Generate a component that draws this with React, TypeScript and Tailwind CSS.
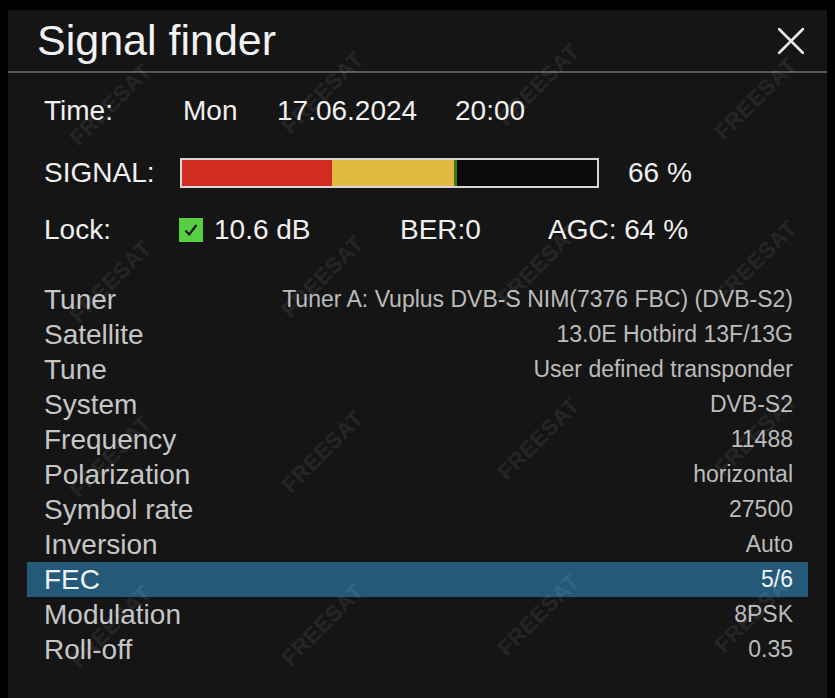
import React from 'react';

interface InfoRow {
  label: string;
  value: string;
  selected?: boolean;
}

const rows: InfoRow[] = [
  { label: 'Tuner', value: 'Tuner A: Vuplus DVB-S NIM(7376 FBC) (DVB-S2)' },
  { label: 'Satellite', value: '13.0E Hotbird 13F/13G' },
  { label: 'Tune', value: 'User defined transponder' },
  { label: 'System', value: 'DVB-S2' },
  { label: 'Frequency', value: '11488' },
  { label: 'Polarization', value: 'horizontal' },
  { label: 'Symbol rate', value: '27500' },
  { label: 'Inversion', value: 'Auto' },
  { label: 'FEC', value: '5/6', selected: true },
  { label: 'Modulation', value: '8PSK' },
  { label: 'Roll-off', value: '0.35' },
];

// watermark spots, panel-relative
const marks = [
  'left-[50px] top-[78px]',
  'left-[262px] top-[66px]',
  'left-[478px] top-[58px]',
  'left-[695px] top-[72px]',
  'left-[50px] top-[255px]',
  'left-[262px] top-[250px]',
  'left-[478px] top-[238px]',
  'left-[695px] top-[235px]',
  'left-[50px] top-[430px]',
  'left-[262px] top-[425px]',
  'left-[478px] top-[412px]',
  'left-[695px] top-[408px]',
  'left-[50px] top-[600px]',
  'left-[262px] top-[598px]',
  'left-[478px] top-[588px]',
  'left-[695px] top-[585px]',
];

export default function App() {
  return (
    <div
      className="w-[835px] h-[698px] bg-black pt-[10px] px-[8px] overflow-hidden"
      style={{ fontFamily: '"Liberation Sans", Arial, sans-serif' }}
    >
      <div className="relative h-full bg-[#151515] overflow-hidden">
        {/* header */}
        <div className="flex items-center justify-between h-[61px] pl-[29px] pr-[23px]">
          <span className="text-[43px] leading-none text-[#f2f2f2]">Signal finder</span>
          <svg width="26" height="26" viewBox="0 0 26 26" className="text-[#e8e8e8]">
            <path d="M1 1 L25 25 M25 1 L1 25" stroke="currentColor" strokeWidth="2.6" strokeLinecap="round" />
          </svg>
        </div>
        <div className="h-[2px] bg-[#565656]" />

        {/* time */}
        <div className="flex items-center h-[40px] mt-[18px] pl-[36px] text-[28px] leading-none text-[#f0f0f0]">
          <span className="w-[139px]">Time:</span>
          <span className="w-[94px]">Mon</span>
          <span className="w-[178px]">17.06.2024</span>
          <span>20:00</span>
        </div>

        {/* signal */}
        <div className="flex items-center h-[40px] mt-[22px] pl-[36px] text-[28px] leading-none text-[#f0f0f0]">
          <span className="w-[136px]">SIGNAL:</span>
          <div className="flex w-[419px] h-[30px] border-2 border-[#d6d6d6] bg-[#0b0b0b]">
            <div className="w-[150px] bg-[#d42b20]" />
            <div className="w-[122px] bg-[#e2b941]" />
            <div className="w-[3px] bg-[#3f7a1c]" />
          </div>
          <span className="ml-[29px]">66 %</span>
        </div>

        {/* lock */}
        <div className="flex items-center h-[40px] mt-[17px] pl-[36px] text-[28px] leading-none text-[#f0f0f0]">
          <span className="w-[135px]">Lock:</span>
          <div className="flex items-center justify-center w-[24px] h-[24px] bg-[#58cf43]">
            <svg width="16" height="16" viewBox="0 0 16 16">
              <path d="M2.5 8.5 L6.2 12.5 L13.5 3" fill="none" stroke="#15240f" strokeWidth="2.4" />
            </svg>
          </div>
          <span className="w-[186px] ml-[11px]">10.6 dB</span>
          <span className="w-[148px]">BER:0</span>
          <span>AGC: 64 %</span>
        </div>

        {/* details */}
        <div className="mt-[32px] mx-[19px]">
          {rows.map(row => (
            <div
              key={row.label}
              className={`flex items-center justify-between h-[35px] pl-[17px] pr-[15px] ${
                row.selected ? 'bg-[#245a78]' : ''
              }`}
            >
              <span
                className={`text-[28px] leading-none ${
                  row.selected ? 'text-[#eef4f8]' : 'text-[#c6c6c6]'
                }`}
              >
                {row.label}
              </span>
              <span
                className={`text-[23px] leading-none ${
                  row.selected ? 'text-[#eef4f8]' : 'text-[#bcbcbc]'
                }`}
              >
                {row.value}
              </span>
            </div>
          ))}
        </div>

        {/* FREESAT watermark */}
        {marks.map((pos, i) => (
          <span
            key={i}
            aria-hidden="true"
            className={`absolute ${pos} -rotate-45 text-[22px] font-bold tracking-wide text-white/[0.07] pointer-events-none select-none`}
          >
            FREESAT
          </span>
        ))}
      </div>
    </div>
  );
}
